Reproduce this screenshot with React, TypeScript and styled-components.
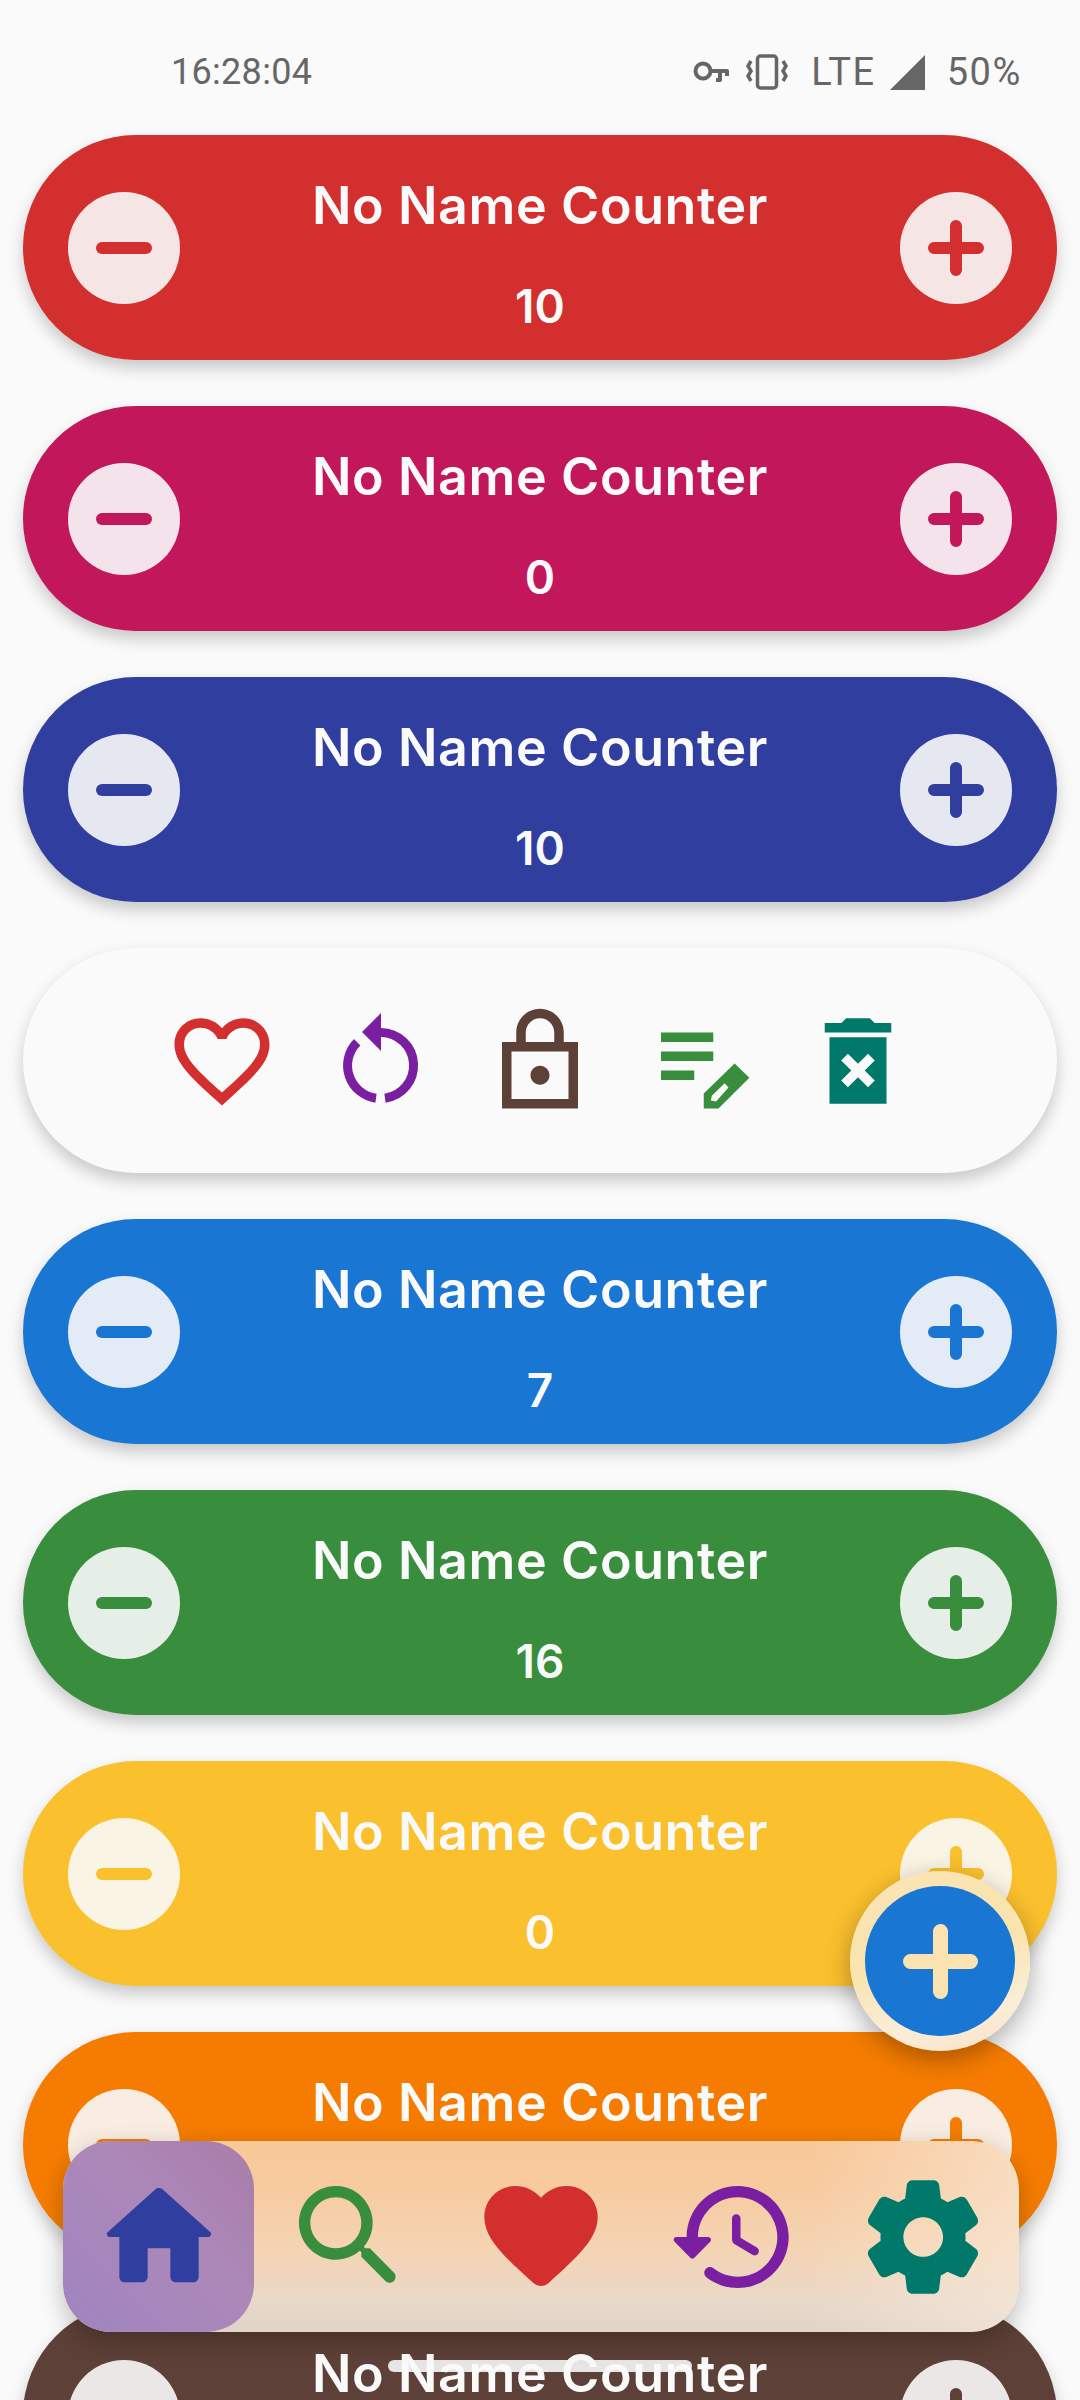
import React from 'react';
import styled, { createGlobalStyle } from 'styled-components';

const GlobalStyle = createGlobalStyle`
	html, body {
		margin: 0;
		padding: 0;
		background: #fafafa;
	}
`;

const Screen = styled.div`
	position: relative;
	width: 1080px;
	height: 2400px;
	overflow: hidden;
	background: #fafafa;
	font-family: 'Inter', 'Liberation Sans', sans-serif;
`;

const StatusBar = styled.div`
	height: 135px;
	box-sizing: border-box;
	padding: 53px 58px 0 171px;
	display: flex;
	align-items: flex-start;
	justify-content: space-between;
	color: #666666;
	font-family: 'Roboto', 'Liberation Sans', sans-serif;
`;

const Clock = styled.span`
	font-size: 36px;
	line-height: 38px;
	letter-spacing: 0.3px;
`;

const StatusRight = styled.div`
	display: flex;
	align-items: center;
	height: 38px;
	font-size: 38px;
`;

const StatusText = styled.span<{ $left: number }>`
	margin-left: ${p => p.$left}px;
	line-height: 38px;
	letter-spacing: 1.6px;
`;

const StatusIcon = styled.svg<{ $left: number }>`
	display: block;
	margin-left: ${p => p.$left}px;
	flex: none;
`;

const List = styled.div`
	display: flex;
	flex-direction: column;
	gap: 46px;
	padding: 0 23px;
`;

const Card = styled.div<{ $color: string }>`
	flex: none;
	height: 225px;
	border-radius: 112.5px;
	background: ${p => p.$color};
	color: #fafafa;
	box-sizing: border-box;
	padding: 0 45px;
	display: flex;
	align-items: center;
	justify-content: space-between;
	box-shadow: 0 8px 16px rgba(0, 0, 0, 0.2);
`;

const RoundButton = styled.div`
	width: 112px;
	height: 112px;
	flex: none;
	border-radius: 50%;
	background: rgba(250, 250, 250, 0.9);
	display: flex;
	align-items: center;
	justify-content: center;
`;

const CardText = styled.div`
	flex: 1;
	align-self: stretch;
	display: flex;
	flex-direction: column;
	align-items: center;
	padding-top: 41px;
`;

const Title = styled.div`
	position: relative;
	z-index: 2;
	font-size: 52px;
	font-weight: 600;
	line-height: 60px;
	letter-spacing: 0.6px;
`;

const Count = styled.div`
	margin-top: 42px;
	font-size: 46px;
	font-weight: 600;
	line-height: 56px;
`;

const ActionCard = styled(Card)`
	justify-content: center;
	gap: 45px;
	padding: 0;
`;

const ActionIcon = styled.svg`
	display: block;
	width: 114px;
	height: 114px;
	flex: none;
`;

const Fab = styled.div`
	position: absolute;
	z-index: 3;
	left: 850px;
	top: 1871px;
	width: 180px;
	height: 180px;
	border-radius: 50%;
	box-sizing: border-box;
	padding: 15px;
	background: linear-gradient(165deg, #f9e5b4 0%, #f9e3ae 45%, #fbeed8 76%, #f8dfc8 100%);
	box-shadow: 0 8px 26px rgba(0, 0, 0, 0.32);
`;

const FabInner = styled.div`
	width: 150px;
	height: 150px;
	border-radius: 50%;
	background: #1976d2;
	display: flex;
	align-items: center;
	justify-content: center;
`;

const BottomNav = styled.div`
	position: absolute;
	z-index: 3;
	left: 63px;
	top: 2141px;
	width: 956px;
	height: 191px;
	border-radius: 48px;
	display: grid;
	grid-template-columns: repeat(5, 1fr);
	background:
		linear-gradient(90deg, rgba(250, 236, 222, 0) 78%, rgba(250, 236, 222, 0.55) 100%),
		linear-gradient(180deg, #f8c898 0%, #f7ca9e 22%, #f4d4b4 58%, #e8d8c8 84%, #e0d4c8 100%);
	box-shadow: 0 8px 24px rgba(0, 0, 0, 0.25);
`;

const NavItem = styled.div<{ $active?: boolean }>`
	border-radius: 48px;
	display: flex;
	align-items: center;
	justify-content: center;
	background: ${p => (p.$active ? 'linear-gradient(to bottom left, #a87ca8 0%, #ac88b8 42%, #a084c0 100%)' : 'transparent')};
`;

const NavIcon = styled.svg<{ $color: string }>`
	display: block;
	width: 136px;
	height: 136px;
	fill: ${p => p.$color};
`;

const HomeBar = styled.div`
	position: absolute;
	z-index: 1;
	left: 388px;
	top: 2360px;
	width: 304px;
	height: 12px;
	border-radius: 6px;
	background: #e8e6e4;
`;

function Plus({ color, size, weight }: { color: string; size: number; weight: number }) {
	const a = weight / 2;
	const b = size - a;
	const m = size / 2;
	return (
		<svg width={size} height={size} viewBox={`0 0 ${size} ${size}`} stroke={color} strokeWidth={weight} strokeLinecap="round">
			<path d={`M${a} ${m}H${b}M${m} ${a}V${b}`} />
		</svg>
	);
}

function Minus({ color }: { color: string }) {
	return (
		<svg width={56} height={56} viewBox="0 0 56 56" stroke={color} strokeWidth={12} strokeLinecap="round">
			<path d="M6 28H50" />
		</svg>
	);
}

function CounterCard({ color, count }: { color: string; count?: number }) {
	return (
		<Card $color={color}>
			<RoundButton><Minus color={color} /></RoundButton>
			<CardText>
				<Title>No Name Counter</Title>
				{count !== undefined && <Count>{count}</Count>}
			</CardText>
			<RoundButton><Plus color={color} size={56} weight={12} /></RoundButton>
		</Card>
	);
}

function App() {
	return (
		<Screen>
			<GlobalStyle />
			<StatusBar>
				<Clock>16:28:04</Clock>
				<StatusRight>
					<StatusIcon $left={0} width={36} height={22} viewBox="0 0 36 22" fill="none" stroke="#666666" strokeWidth={4}>
						<circle cx="10" cy="10" r="7.5" />
						<path d="M17 10H34V15M27 10V19H23" strokeLinejoin="round" />
					</StatusIcon>
					<StatusIcon $left={17} width={42} height={36} viewBox="0 0 42 36" fill="none" stroke="#666666" strokeWidth={3.5}>
						<rect x="11.5" y="2" width="19" height="32" rx="3" />
						<path d="M5 7L2 12L5 17L2 22L5 27M37 7L40 12L37 17L40 22L37 27" />
					</StatusIcon>
					<StatusText $left={23}>LTE</StatusText>
					<StatusIcon $left={14} width={35} height={35} viewBox="0 0 35 35" fill="#666666">
						<path d="M35 0V35H0Z" />
					</StatusIcon>
					<StatusText $left={22}>50%</StatusText>
				</StatusRight>
			</StatusBar>

			<List>
				<CounterCard color="#d32f2f" count={10} />
				<CounterCard color="#c2185b" count={0} />
				<CounterCard color="#303f9f" count={10} />
				<ActionCard $color="#fafafa">
					<ActionIcon viewBox="0 0 24 24" fill="#d32f2f">
						<path d="M16.5 3c-1.74 0-3.41.81-4.5 2.09C10.91 3.81 9.24 3 7.5 3 4.42 3 2 5.42 2 8.5c0 3.78 3.4 6.86 8.55 11.54L12 21.35l1.45-1.32C18.6 15.36 22 12.28 22 8.5 22 5.42 19.58 3 16.5 3zm-4.4 15.55l-.1.1-.1-.1C7.14 14.24 4 11.39 4 8.5 4 6.5 5.5 5 7.5 5c1.54 0 3.04.99 3.57 2.36h1.87C13.46 5.99 14.96 5 16.5 5c2 0 3.5 1.5 3.5 3.5 0 2.89-3.14 5.74-7.9 10.05z" />
					</ActionIcon>
					<ActionIcon viewBox="0 0 114 114" fill="#7b1fa2">
						<path d="M57 9L38 28L57 47Z" />
						<path d="M57 28.5A33 33 0 0 1 61 94.2M52 94.2A33 33 0 0 1 33.2 38.2" fill="none" stroke="#7b1fa2" strokeWidth={9} />
					</ActionIcon>
					<ActionIcon viewBox="0 0 24 24" fill="#5d4037">
						<path d="M20 8h-3V6c0-2.76-2.24-5-5-5S7 3.24 7 6v2H4v14h16V8zM9 6c0-1.66 1.34-3 3-3s3 1.34 3 3v2H9V6zm9 14H6V10h12v10zm-6-3c1.1 0 2-.9 2-2s-.9-2-2-2-2 .9-2 2 .9 2 2 2z" />
					</ActionIcon>
					<ActionIcon viewBox="0 0 24 24" fill="#388e3c">
						<path d="M4 6h11v2H4zM4 10h11v2H4zM4 14h7v2H4z" />
						<path fillRule="evenodd" d="M13 22V18.84L19.5 12.53L22.6 15.5L16.1 22ZM14.5 20.3L14.7 19.3L17.4 16.7L18.2 17.6L15.6 20.5Z" />
					</ActionIcon>
					<ActionIcon viewBox="0 0 24 24" fill="#00796b">
						<path d="M6 21h12V7H6v14zm2.46-9.12l1.41-1.41L12 12.59l2.12-2.12 1.41 1.41L13.41 14l2.12 2.12-1.41 1.41L12 15.41l-2.12 2.12-1.41-1.41L10.59 14l-2.13-2.12zM15.5 4l-1-1h-5l-1 1H5v2h14V4z" />
					</ActionIcon>
				</ActionCard>
				<CounterCard color="#1976d2" count={7} />
				<CounterCard color="#388e3c" count={16} />
				<CounterCard color="#fbc02d" count={0} />
				<CounterCard color="#f57c00" />
				<CounterCard color="#5d4037" />
			</List>

			<Fab>
				<FabInner><Plus color="#fae3b0" size={75} weight={15} /></FabInner>
			</Fab>

			<BottomNav>
				<NavItem $active>
					<NavIcon $color="#303f9f" viewBox="0 0 24 24">
						<path d="M10 19v-5h4v5c0 .55.45 1 1 1h3c.55 0 1-.45 1-1v-7h1.7c.46 0 .68-.57.33-.87L12.67 3.6c-.38-.34-.96-.34-1.34 0l-8.36 7.53c-.34.3-.13.87.33.87H5v7c0 .55.45 1 1 1h3c.55 0 1-.45 1-1z" />
					</NavIcon>
				</NavItem>
				<NavItem>
					<NavIcon $color="#388e3c" viewBox="0 0 24 24">
						<path d="M15.5 14h-.79l-.28-.27c1.2-1.4 1.82-3.31 1.48-5.34-.47-2.78-2.79-5-5.59-5.34-4.23-.52-7.79 3.04-7.27 7.27.34 2.8 2.56 5.12 5.34 5.59 2.03.34 3.94-.28 5.34-1.48l.27.28v.79l4.25 4.25c.41.41 1.08.41 1.49 0 .41-.41.41-1.08 0-1.49L15.5 14zm-6 0C7.01 14 5 11.99 5 9.5S7.01 5 9.5 5 14 7.01 14 9.5 11.99 14 9.5 14z" />
					</NavIcon>
				</NavItem>
				<NavItem>
					<NavIcon $color="#d32f2f" viewBox="0 0 24 24">
						<path d="M13.35 20.13c-.76.69-1.93.69-2.69-.01l-.11-.1C5.3 15.27 1.87 12.15 2 8.26c.06-1.7.93-3.33 2.34-4.29 2.64-1.8 5.9-.96 7.66 1.1 1.76-2.06 5.02-2.91 7.66-1.1 1.41.96 2.28 2.59 2.34 4.29.14 3.89-3.3 7.01-8.55 11.78l-.1.09z" />
					</NavIcon>
				</NavItem>
				<NavItem>
					<NavIcon $color="#7b1fa2" viewBox="0 0 24 24">
						<path d="M13.26 3C8.17 2.86 4 6.95 4 12H2.21c-.45 0-.67.54-.35.85l2.79 2.8c.2.2.51.2.71 0l2.79-2.8c.31-.31.09-.85-.36-.85H6c0-3.9 3.18-7.05 7.1-7 3.72.05 6.85 3.18 6.9 6.9.05 3.91-3.1 7.1-7 7.1-1.61 0-3.1-.55-4.28-1.48-.4-.31-.96-.28-1.32.08-.42.43-.39 1.14.08 1.5C9 20.29 10.91 21 13 21c5.05 0 9.14-4.17 9-9.26-.13-4.69-4.05-8.61-8.74-8.74zm-.51 5c-.41 0-.75.34-.75.75v3.68c0 .35.19.68.49.86l3.12 1.85c.36.21.82.09 1.03-.26.21-.36.09-.82-.26-1.03l-2.88-1.71v-3.4c0-.4-.34-.74-.75-.74z" />
					</NavIcon>
				</NavItem>
				<NavItem>
					<NavIcon $color="#00796b" viewBox="0 0 24 24">
						<path d="M19.5 12c0-.23-.01-.45-.03-.68l1.86-1.41c.4-.3.51-.86.26-1.3l-1.87-3.23c-.25-.44-.79-.62-1.25-.42l-2.15.91c-.37-.26-.76-.49-1.17-.68l-.29-2.31c-.06-.5-.49-.88-.99-.88h-3.73c-.51 0-.94.38-1 .88l-.29 2.31c-.41.19-.8.42-1.17.68l-2.15-.91c-.46-.2-1-.02-1.25.42L2.41 8.62c-.25.44-.14.99.26 1.3l1.86 1.41c-.02.22-.03.44-.03.67s.01.45.03.68l-1.86 1.41c-.4.3-.51.86-.26 1.3l1.87 3.23c.25.44.79.62 1.25.42l2.15-.91c.37.26.76.49 1.17.68l.29 2.31c.06.5.49.88.99.88h3.73c.5 0 .93-.38.99-.88l.29-2.31c.41-.19.8-.42 1.17-.68l2.15.91c.46.2 1 .02 1.25-.42l1.87-3.23c.25-.44.14-.99-.26-1.3l-1.86-1.41c.03-.23.04-.45.04-.68zm-7.46 3.5c-1.93 0-3.5-1.57-3.5-3.5s1.57-3.5 3.5-3.5 3.5 1.57 3.5 3.5-1.57 3.5-3.5 3.5z" />
					</NavIcon>
				</NavItem>
			</BottomNav>

			<HomeBar />
		</Screen>
	);
}

export default App;
